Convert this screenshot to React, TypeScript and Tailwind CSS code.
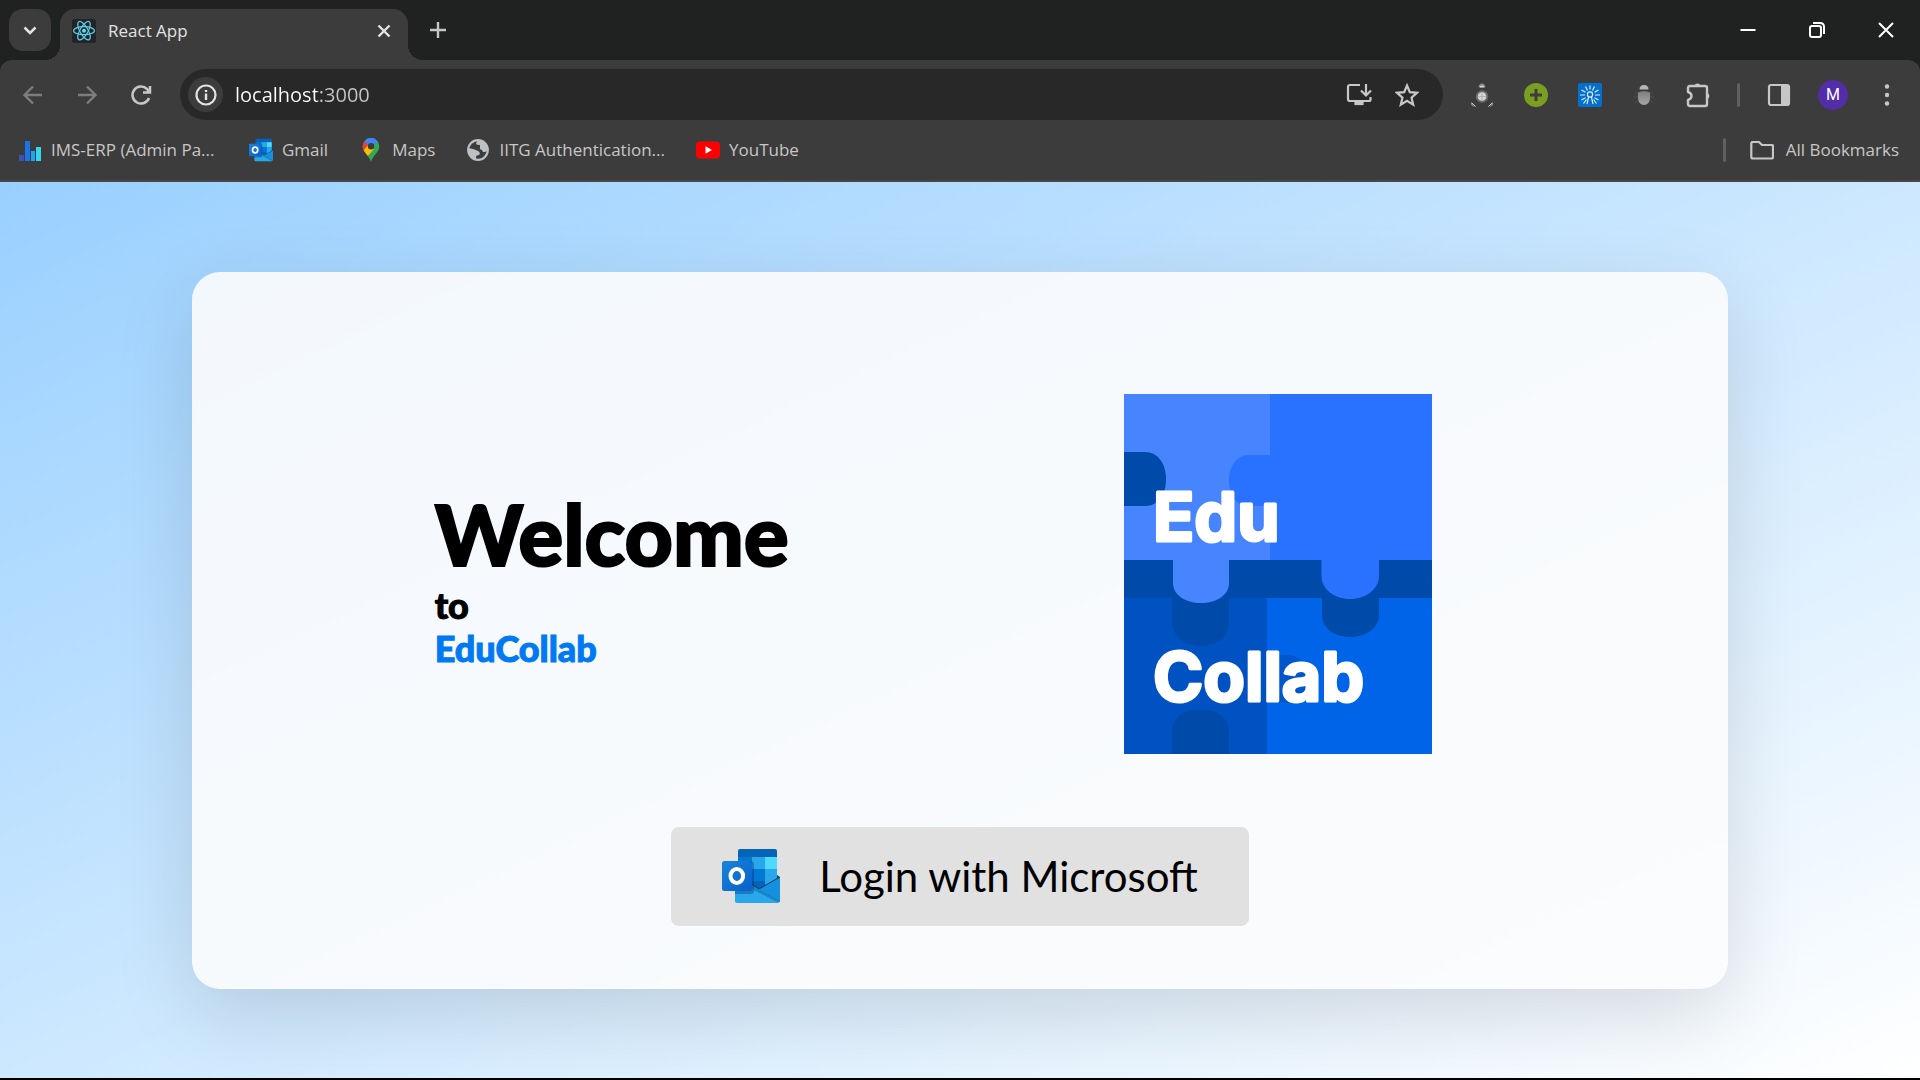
import type { ReactNode } from 'react';

function ReactIcon() {
  return (
    <svg viewBox="0 0 24 24" className="size-6 shrink-0" aria-hidden="true">
      <rect width="24" height="24" rx="2.5" fill="#222426" />
      <g fill="none" stroke="#5ed2ee" strokeWidth="1.200">
        <ellipse cx="12" cy="11.700" rx="10.400" ry="4" />
        <ellipse cx="12" cy="11.700" rx="10.400" ry="4" transform="rotate(60 12 11.700)" />
        <ellipse cx="12" cy="11.700" rx="10.400" ry="4" transform="rotate(120 12 11.700)" />
      </g>
      <circle cx="12" cy="11.700" r="2" fill="#61dafb" />
    </svg>
  );
}

function OutlookIcon({ id, className }: { id: string; className: string }) {
  return (
    <svg viewBox="0 0 58 54" className={className} aria-hidden="true">
      <defs>
        <linearGradient id={id} x1="0" y1="0" x2="1" y2="1">
          <stop offset="0" stopColor="#1784d9" />
          <stop offset="1" stopColor="#0a5fcb" />
        </linearGradient>
      </defs>
      <path d="M18 0H53Q55 0 55 2V8H16V2Q16 0 18 0Z" fill="#0364b8" />
      <path d="M16 8H55V43H16Z" fill="#0364b8" />
      <path d="M16 8H30V32H16Z" fill="#0078d4" />
      <path d="M30 8H43V20H30Z" fill="#28a8ea" />
      <path d="M43 8H55V20H43Z" fill="#50d9ff" />
      <path d="M30 20H43V32H30Z" fill="#0078d4" />
      <path d="M43 20H55V36H43Z" fill="#28a8ea" />
      <path d="M55 26L58 28V30L38 41L30 37V35L37 39.500L55 29Z" fill="#123b6d" />
      <path d="M58 28.500V53L30 38.500L37 40.500Z" fill="#1490df" />
      <path d="M13 35H28L57 53Q56.500 54 55 54H15Q13 54 13 52Z" fill="#28a8ea" />
      <path d="M30 36.500L58 52V53L56 53.500L30 40Z" fill="#1275b8" opacity=".7" />
      <path d="M13 12H29Q32 12 32 15V42Q32 45 28 45H13Z" fill="#0a2767" opacity=".35" />
      <rect y="12" width="30" height="30" rx="2.500" fill={`url(#${id})`} />
      <ellipse cx="14.800" cy="27" rx="6.300" ry="7" fill="none" stroke="#fff" strokeWidth="4" />
    </svg>
  );
}

function EduCollabLogo() {
  return (
    <svg viewBox="0 0 308 360" className="h-[360px] w-[308px] shrink-0" role="img" aria-label="Edu Collab">
      <path d="M0 0H146V166H0Z" fill="#4784ff" />
      <path d="M146 0H308V166H146Z" fill="#2972ff" />
      <path d="M147 61H125C112 61 105 73 105 86C105 101 112 112 125 112H147Z" fill="#2972ff" />
      <path d="M0 58H21C34 58 42 70 42 85C42 101 34 112 21 112H0Z" fill="#004aaa" />
      <path d="M0 166H308V205H0Z" fill="#004aaa" />
      <path d="M0 204H143V360H0Z" fill="#0052c2" />
      <path d="M143 204H308V360H143Z" fill="#0064e8" />
      <path d="M143 261H163C177 261 185 272 185 285C185 299 176 309 163 309H143Z" fill="#0056cc" />
      <path d="M48 204H105V228C105 243 93 252 77 252C61 252 48 243 48 228Z" fill="#004aaa" />
      <path d="M198 204H255V221C255 234 242 243 226 243C210 243 198 234 198 221Z" fill="#004aaa" />
      <path d="M49 165H105V189C105 201 93 209 77 209C61 209 49 201 49 189Z" fill="#4784ff" />
      <path d="M197.500 165H255V182C255 195 242 205 226 205C210 205 197.500 195 197.500 182Z" fill="#2972ff" />
      <path d="M48 360V338C48 325 58 316 72 316H81C95 316 105 325 105 338V360Z" fill="#004aaa" />
      <g
        className='font-["Inter",sans-serif] text-[68px] font-bold'
        fill="#fff"
        stroke="#fff"
        strokeWidth="3"
        strokeLinejoin="round"
      >
        <text x="29" y="147">Edu</text>
        <text x="29" y="307">Collab</text>
      </g>
    </svg>
  );
}

function IconButton({ label, className = 'w-[54px]', children }: { label: string; className?: string; children: ReactNode }) {
  return (
    <button aria-label={label} className={`flex h-[51px] shrink-0 items-center justify-center ${className}`}>
      {children}
    </button>
  );
}

function Line({ d, color = '#c7c7c7', width = 2, className = 'size-6' }: { d: string; color?: string; width?: number; className?: string }) {
  return (
    <svg viewBox="0 0 24 24" className={className} fill="none" stroke={color} strokeWidth={width} aria-hidden="true">
      <path d={d} />
    </svg>
  );
}

function TitleBar() {
  return (
    <header className="flex h-[60px] items-start bg-[#202221] pt-[9px] pl-[9px]">
      <button aria-label="Search tabs" className="flex size-[42px] items-center justify-center rounded-[14px] bg-[#3c3c3c]">
        <Line d="M6.500 9.500L12 15L17.500 9.500" color="#e3e3e3" width={2.5} />
      </button>
      <div className="relative ml-[9px] flex h-[51px] w-[348px] items-center rounded-t-[15px] bg-[#3c3c3c] px-3 pb-2">
        <span className="absolute bottom-0 -left-[15px] size-[15px] bg-[radial-gradient(circle_at_top_left,transparent_15px,#3c3c3c_15px)]" />
        <span className="absolute -right-[15px] bottom-0 size-[15px] bg-[radial-gradient(circle_at_top_right,transparent_15px,#3c3c3c_15px)]" />
        <ReactIcon />
        <span className="ml-3 grow text-[17px] leading-6 text-[#e3e3e3]">React App</span>
        <button aria-label="Close tab">
          <Line d="M6.500 6.500L17.500 17.500M17.500 6.500L6.500 17.500" color="#e3e3e3" width={2.4} />
        </button>
      </div>
      <button aria-label="New tab" className="ml-[9px] flex size-[42px] items-center justify-center">
        <Line d="M12 4V20M4 12H20" width={2.4} />
      </button>
      <div className="-mt-[9px] ml-auto flex">
        <IconButton label="Minimize" className="w-[69px] pt-2">
          <Line d="M4.500 12H19.500" color="#fff" />
        </IconButton>
        <IconButton label="Restore" className="w-[69px] pt-2">
          <Line d="M7 8H14Q16 8 16 10V17Q16 19 14 19H7Q5 19 5 17V10Q5 8 7 8ZM8 5H15Q19 5 19 9V16" color="#fff" />
        </IconButton>
        <IconButton label="Close" className="w-[69px] pt-2">
          <Line d="M5 5L19 19M19 5L5 19" color="#fff" />
        </IconButton>
      </div>
    </header>
  );
}

function Toolbar() {
  return (
    <div className="flex h-[69px] items-center px-[6px]">
      <IconButton label="Back">
        <Line d="M21 12H4M12 3.500L3.500 12L12 20.500" color="#7d7d7d" width={2.4} />
      </IconButton>
      <IconButton label="Forward">
        <Line d="M3 12H20M12 3.500L20.500 12L12 20.500" color="#7d7d7d" width={2.4} />
      </IconButton>
      <IconButton label="Reload">
        <Line d="M20 15A8.500 8.500 0 1 1 18 6L20 8.500M21 3V9.500H14" width={2.5} />
      </IconButton>
      <div className="ml-3 flex h-[51px] grow items-center rounded-full bg-[#282828] pr-3 pl-2">
        <button aria-label="View site information" className="flex size-[35px] shrink-0 items-center justify-center rounded-full bg-[#3c3c3c]">
          <svg viewBox="0 0 24 24" className="size-6" aria-hidden="true">
            <circle cx="12" cy="12" r="9.500" fill="none" stroke="#e3e3e3" strokeWidth="2.200" />
            <path d="M10.800 10.500H13.200V17H10.800ZM10.800 7H13.200V9H10.800Z" fill="#e3e3e3" />
          </svg>
        </button>
        <input
          aria-label="Address and search bar"
          defaultValue="localhost:3000"
          className="ml-3 min-w-0 grow bg-[linear-gradient(90deg,#ffffff_82px,#c7c7c7_82px)] bg-clip-text text-[20px] leading-7 text-transparent caret-white outline-none"
        />
        <IconButton label="Install app" className="w-12">
          <svg viewBox="0 0 26 26" className="size-[26px]" fill="none" stroke="#c7c7c7" strokeWidth="2.200" aria-hidden="true">
            <path d="M14 3H4Q2 3 2 5V17Q2 19 4 19H23Q24.500 19 24.500 17.500V15M20 2V12.500M15 8.500L20 13.500L25 8.500" />
            <path d="M9.500 20H16.500V22H9.500Z" fill="#c7c7c7" />
          </svg>
        </IconButton>
        <IconButton label="Bookmark this tab" className="w-12">
          <Line d="M12 2.500L14.800 9.200L22 9.800L16.500 14.600L18.200 21.600L12 17.900L5.800 21.600L7.500 14.600L2 9.800L9.200 9.200Z" width={2.2} />
        </IconButton>
      </div>
      <div className="ml-3 flex items-center">
        <IconButton label="Extension: drone">
          <svg viewBox="0 0 24 24" className="size-6" aria-hidden="true">
            <circle cx="12" cy="13.500" r="6.200" fill="#6b6b6b" />
            <circle cx="12" cy="13.500" r="4.300" fill="#d4d4d4" />
            <path d="M12 9.500V17.500M8 13.500H16" stroke="#b3b3b3" strokeWidth="1" />
            <path d="M8.500 4.500Q9 .5 12 .5T15.500 4.500ZM1 18.500L4.500 24Q.2 23 1 18.500ZM23 18.500L19.500 24Q23.800 23 23 18.500Z" fill="#8c8c8c" />
            <path d="M10 4Q12 1.500 14 4ZM2 20L5.500 23.500ZM22 20L18.500 23.500Z" fill="#e0e0e0" stroke="#d0d0d0" strokeWidth=".8" />
          </svg>
        </IconButton>
        <IconButton label="Extension: add">
          <svg viewBox="0 0 24 24" className="size-6" aria-hidden="true">
            <circle cx="12" cy="12" r="12" fill="#7a9e1f" />
            <path d="M12 6V18M6 12H18" stroke="#3c3c3c" strokeWidth="3" />
          </svg>
        </IconButton>
        <IconButton label="Extension: rays">
          <svg viewBox="0 0 24 24" className="size-6" fill="none" stroke="#d8edfc" strokeWidth="1.200" aria-hidden="true">
            <rect width="24" height="24" rx="2" fill="#0470cb" stroke="none" />
            <circle cx="12" cy="11.500" r="2.600" />
            <path d="M10.600 13.800L9 21M13.400 13.800L15 21M12 2.500V6.500M7.500 3.500L9.500 7.500M16.500 3.500L14.500 7.500M3.500 7L7.500 9.300M20.500 7L16.500 9.300M2 12H7M22 12H17M3.500 17L7.500 14.700M20.500 17L16.500 14.700M5.500 20.500L8.500 16.500M18.500 20.500L15.500 16.500" />
          </svg>
        </IconButton>
        <IconButton label="Extension: bug">
          <svg viewBox="0 0 24 24" className="size-6" aria-hidden="true">
            <defs>
              <linearGradient id="bug" x1="0" y1="0" x2="0" y2="1">
                <stop offset="0" stopColor="#7d7d7d" />
                <stop offset="1" stopColor="#a8a8a8" />
              </linearGradient>
            </defs>
            <path d="M3 9L6 11M21 9L18 11M2 14H6M22 14H18M3 20L6 17M21 20L18 17" stroke="#505050" strokeWidth="1" />
            <path d="M7.500 6.500Q7.500 2 12 2T16.500 6.500Z" fill="#b5b5b5" />
            <path d="M6 9.500Q12 7 18 9.500V15Q17.500 22 12 22T6 15Z" fill="url(#bug)" />
          </svg>
        </IconButton>
        <IconButton label="Extensions">
          <svg viewBox="0 0 26 26" className="size-[26px]" fill="none" stroke="#c7c7c7" strokeWidth="2.400" strokeLinejoin="round" aria-hidden="true">
            <path d="M5 4H20Q22 4 22 6V22Q22 24 20 24H5Q3 24 3 22V18Q6.500 17 6.500 14T3 10V6Q3 4 5 4Z" />
            <path d="M9.500 3.500A3.300 3.300 0 0 1 15.500 3.500ZM22.500 11A3.300 3.300 0 0 1 22.500 17Z" fill="#c7c7c7" stroke="none" />
          </svg>
        </IconButton>
        <span className="mx-3 h-6 w-[3px] rounded-full bg-[#606060]" />
        <IconButton label="Side panel">
          <svg viewBox="0 0 24 24" className="size-6" aria-hidden="true">
            <rect x="2" y="2" width="20" height="20" rx="2" fill="none" stroke="#c7c7c7" strokeWidth="2.200" />
            <path d="M14 2H22V22H14Z" fill="#c7c7c7" />
          </svg>
        </IconButton>
        <IconButton label="Profile">
          <span className='flex size-[30px] items-center justify-center rounded-full bg-[#512da8] font-["Roboto",sans-serif] text-[16px] leading-5 text-white'>M</span>
        </IconButton>
        <IconButton label="Menu">
          <svg viewBox="0 0 24 24" className="size-6" fill="#c7c7c7" aria-hidden="true">
            <circle cx="12" cy="3.500" r="2.200" />
            <circle cx="12" cy="12" r="2.200" />
            <circle cx="12" cy="20.500" r="2.200" />
          </svg>
        </IconButton>
      </div>
    </div>
  );
}

function Bookmark({ icon, className = '', children }: { icon: ReactNode; className?: string; children: ReactNode }) {
  return (
    <a href="#" className={`flex items-center gap-[9px] whitespace-nowrap ${className}`}>
      {icon}
      {children}
    </a>
  );
}

function BookmarksBar() {
  return (
    <nav aria-label="Bookmarks" className="flex h-[53px] items-center gap-[31px] border-b-2 border-[#474747] pr-[21px] pb-[9px] pl-[18px] text-[17px] leading-6 text-[#c7c7c7]">
      <Bookmark
        className="min-w-[200px]"
        icon={
          <svg viewBox="0 0 24 24" className="size-6" aria-hidden="true">
            <path d="M1 17H6V23H1Z" fill="#3f51b5" />
            <path d="M7 3H12V23H7Z" fill="#1a73e8" />
            <path d="M13 13H17V23H13Z" fill="#12aaf5" />
            <path d="M18 9H23V23H18Z" fill="#35d6ee" />
          </svg>
        }
      >
        IMS-ERP (Admin Pa...
      </Bookmark>
      <Bookmark icon={<OutlookIcon id="outlook-small" className="size-6" />}>Gmail</Bookmark>
      <Bookmark
        icon={
          <svg viewBox="0 0 24 24" className="size-6" aria-hidden="true">
            <clipPath id="pin">
              <path d="M12 0A8.300 8.300 0 0 1 20.300 8.300C20.300 14.500 14 17 12 24C10 17 3.700 14.500 3.700 8.300A8.300 8.300 0 0 1 12 0Z" />
            </clipPath>
            <g clipPath="url(#pin)">
              <path d="M0 0H24V24H0Z" fill="#34a853" />
              <path d="M0 18L20 -4H0Z" fill="#1a73e8" />
              <path d="M0 0L12 8L2 20Z" fill="#ea4335" />
              <path d="M5 3L8 0H24L19 4L12 9Z" fill="#4285f4" />
              <path d="M2 16L9 7L15 11L7 20Z" fill="#fbbc04" />
            </g>
            <circle cx="12" cy="8.300" r="3.200" fill="#3c3c3c" />
          </svg>
        }
      >
        Maps
      </Bookmark>
      <Bookmark
        icon={
          <svg viewBox="0 0 24 24" className="size-6" aria-hidden="true">
            <circle cx="12" cy="12" r="9.800" fill="#3c3c3c" stroke="#bdc1c6" strokeWidth="2.200" />
            <path d="M13 2Q10 4 10 6Q11 7 14 7V10Q13 11 16 12L17 14H19Q22 13 22 11Q21 3 13 2ZM2 10L7 11Q10 12 12 13Q15 15 13 17Q10 17 10 19V22Q3 20 2 13Z" fill="#bdc1c6" />
          </svg>
        }
      >
        IITG Authentication...
      </Bookmark>
      <Bookmark
        icon={
          <svg viewBox="0 0 24 24" className="size-6" aria-hidden="true">
            <rect y="3.500" width="24" height="17" rx="4" fill="#f00" />
            <path d="M9.500 8.300L16 12L9.500 15.700Z" fill="#fff" />
          </svg>
        }
      >
        YouTube
      </Bookmark>
      <div className="ml-auto flex items-center gap-6">
        <span className="h-6 w-[3px] rounded-full bg-[#606060]" />
        <button className="flex items-center gap-3">
          <svg viewBox="0 0 24 24" className="size-6" fill="none" stroke="#c7c7c7" strokeWidth="2.200" strokeLinejoin="round" aria-hidden="true">
            <path d="M2 4H9L12 7H22Q23 7 23 8V19Q23 20.500 21.500 20.500H3Q1.300 20.500 1.300 19V5.500Q1.300 4 3 4Z" />
          </svg>
          All Bookmarks
        </button>
      </div>
    </nav>
  );
}

export default function App() {
  return (
    <div className='flex min-h-screen flex-col border-b-2 border-black bg-[#202221] font-["Open_Sans",sans-serif]'>
      <TitleBar />
      <div className="rounded-t-xl bg-[#3c3c3c]">
        <Toolbar />
        <BookmarksBar />
      </div>
      <main className="flex grow items-center justify-center overflow-hidden bg-linear-to-br from-[#99d0ff] to-white py-[89px]">
        <section className='flex w-4/5 flex-col items-center rounded-[28px] bg-[#fcfcfd]/90 pt-[122px] pb-[63px] font-["Lato",sans-serif] text-black shadow-[0_25px_80px_rgba(0,0,0,0.13)]'>
          <div className="flex w-full items-center justify-between pr-[19.25%] pl-[15.8%]">
            <div className="pt-1.5 font-black">
              <h1 className="text-[84px] leading-[100px] [-webkit-text-stroke:2px_black]">Welcome</h1>
              <p className="text-[36px] leading-[43px] [-webkit-text-stroke:1px_black]">to</p>
              <p className="text-[36px] leading-[43px] text-[#0079f2] [-webkit-text-stroke:1px_#0079f2]">EduCollab</p>
            </div>
            <EduCollabLogo />
          </div>
          <button className="mt-[73px] flex h-[99px] items-center gap-[39px] rounded-lg bg-[#e1e1e1] px-[51px] text-[42px] leading-[52px]">
            <OutlookIcon id="outlook-large" className="h-[54px] w-[58px]" />
            Login with Microsoft
          </button>
        </section>
      </main>
    </div>
  );
}
